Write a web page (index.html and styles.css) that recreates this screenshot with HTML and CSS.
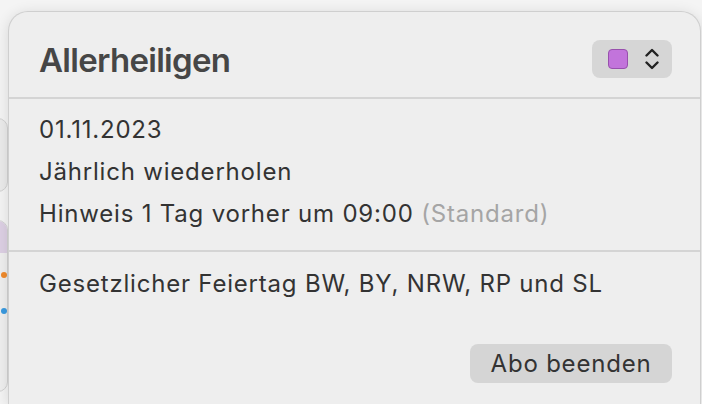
FILE: index.html
```html
<!DOCTYPE html>
<html lang="de">
<head>
<meta charset="UTF-8">
<meta name="viewport" content="width=device-width, initial-scale=1.0">
<title>Allerheiligen</title>
<link rel="stylesheet" href="styles.css">
</head>
<body>

<div class="calendar">
  <div class="cal-cell cal-top"></div>
  <div class="cal-cell cal-event">
    <div class="cal-band"></div>
    <span class="dot dot-orange"></span>
    <span class="dot dot-blue"></span>
  </div>
</div>

<div class="popover">
  <div class="pop-header">
    <h1 class="pop-title">Allerheiligen</h1>
    <button class="color-picker">
      <span class="swatch"></span>
      <svg class="chevrons" width="14" height="22" viewBox="0 0 14 22">
        <polyline points="1.5,7.5 7,2 12.5,7.5" />
        <polyline points="1.5,14.5 7,20 12.5,14.5" />
      </svg>
    </button>
  </div>

  <div class="pop-section">
    <div class="pop-line">01.11.2023</div>
    <div class="pop-line">Jährlich wiederholen</div>
    <div class="pop-line">Hinweis 1 Tag vorher um 09:00 <span class="muted">(Standard)</span></div>
  </div>

  <div class="pop-section pop-notes">
    <div class="pop-line">Gesetzlicher Feiertag BW, BY, NRW, RP und SL</div>
    <div class="pop-actions">
      <button class="button">Abo beenden</button>
    </div>
  </div>
</div>

</body>
</html>
```

FILE: styles.css
```css
html, body {
  margin: 0;
  width: 702px;
  height: 404px;
  overflow: hidden;
  background-color: #f4f4f4;
  font-family: "Inter", "Liberation Sans", sans-serif;
  color: #333;
}

/* calendar peeking out behind the popover */
.calendar {
  display: flex;
  flex-direction: column;
  gap: 28px;
  width: 20px;
  margin-left: -12px;
  padding-top: 118px;
}
.cal-cell {
  background-color: #ebebeb;
  border: 1px solid #d2d2d2;
  border-radius: 12px;
}
.cal-top {
  height: 72px;
}
.cal-event {
  height: 170px;
  position: relative;
  overflow: hidden;
  background-color: #efefef;
}
.cal-band {
  height: 32px;
  background-color: #ddd0e4;
}
.dot {
  position: absolute;
  left: 12px;
  width: 6px;
  height: 6px;
  border-radius: 50%;
}
.dot-orange { top: 51px; background-color: #f08a2c; }
.dot-blue { top: 87px; background-color: #3a9ae0; }

/* popover */
.popover {
  position: absolute;
  left: 8px;
  top: 11px;
  width: 693px;
  height: 393px;
  background-color: #eeeeee;
  border: 1px solid #cfcfcf;
  border-bottom: none;
  border-radius: 20px 20px 0 0;
  box-shadow: 0 2px 14px rgba(0,0,0,0.12);
  box-sizing: border-box;
}
.pop-header {
  display: flex;
  align-items: center;
  justify-content: space-between;
  height: 85px;
  padding: 0 28px 0 30px;
  border-bottom: 2px solid #d4d4d4;
}
.pop-title {
  margin: 0;
  font-size: 33px;
  font-weight: 600;
  color: #464646;
  letter-spacing: -0.7px;
  padding-top: 10px;
}
.color-picker {
  display: flex;
  align-items: center;
  gap: 17px;
  width: 80px;
  height: 38px;
  padding: 0 0 0 16px;
  margin-top: 8px;
  border: none;
  border-radius: 8px;
  background-color: #d6d6d6;
  box-sizing: border-box;
}
.swatch {
  width: 20px;
  height: 20px;
  box-sizing: border-box;
  border-radius: 4px;
  background-color: #c274db;
  border: 1.5px solid #9850ad;
}
.chevrons polyline {
  fill: none;
  stroke: #222;
  stroke-width: 2.4;
  stroke-linecap: round;
  stroke-linejoin: round;
}

.pop-section {
  padding: 10px 28px 15px 30px;
  border-bottom: 2px solid #d4d4d4;
}
.pop-notes {
  border-bottom: none;
  padding-top: 11px;
  padding-bottom: 0;
}
.pop-line {
  font-size: 24px;
  line-height: 42px;
  color: #333;
  letter-spacing: 0.8px;
}
.muted {
  color: #a5a5a5;
}
.pop-actions {
  display: flex;
  justify-content: flex-end;
  margin-top: 39px;
}
.button {
  font-family: inherit;
  font-size: 24px;
  letter-spacing: 0.8px;
  color: #333;
  background-color: #d5d5d5;
  border: none;
  border-radius: 8px;
  height: 39px;
  width: 202px;
  padding: 0;
}
```
